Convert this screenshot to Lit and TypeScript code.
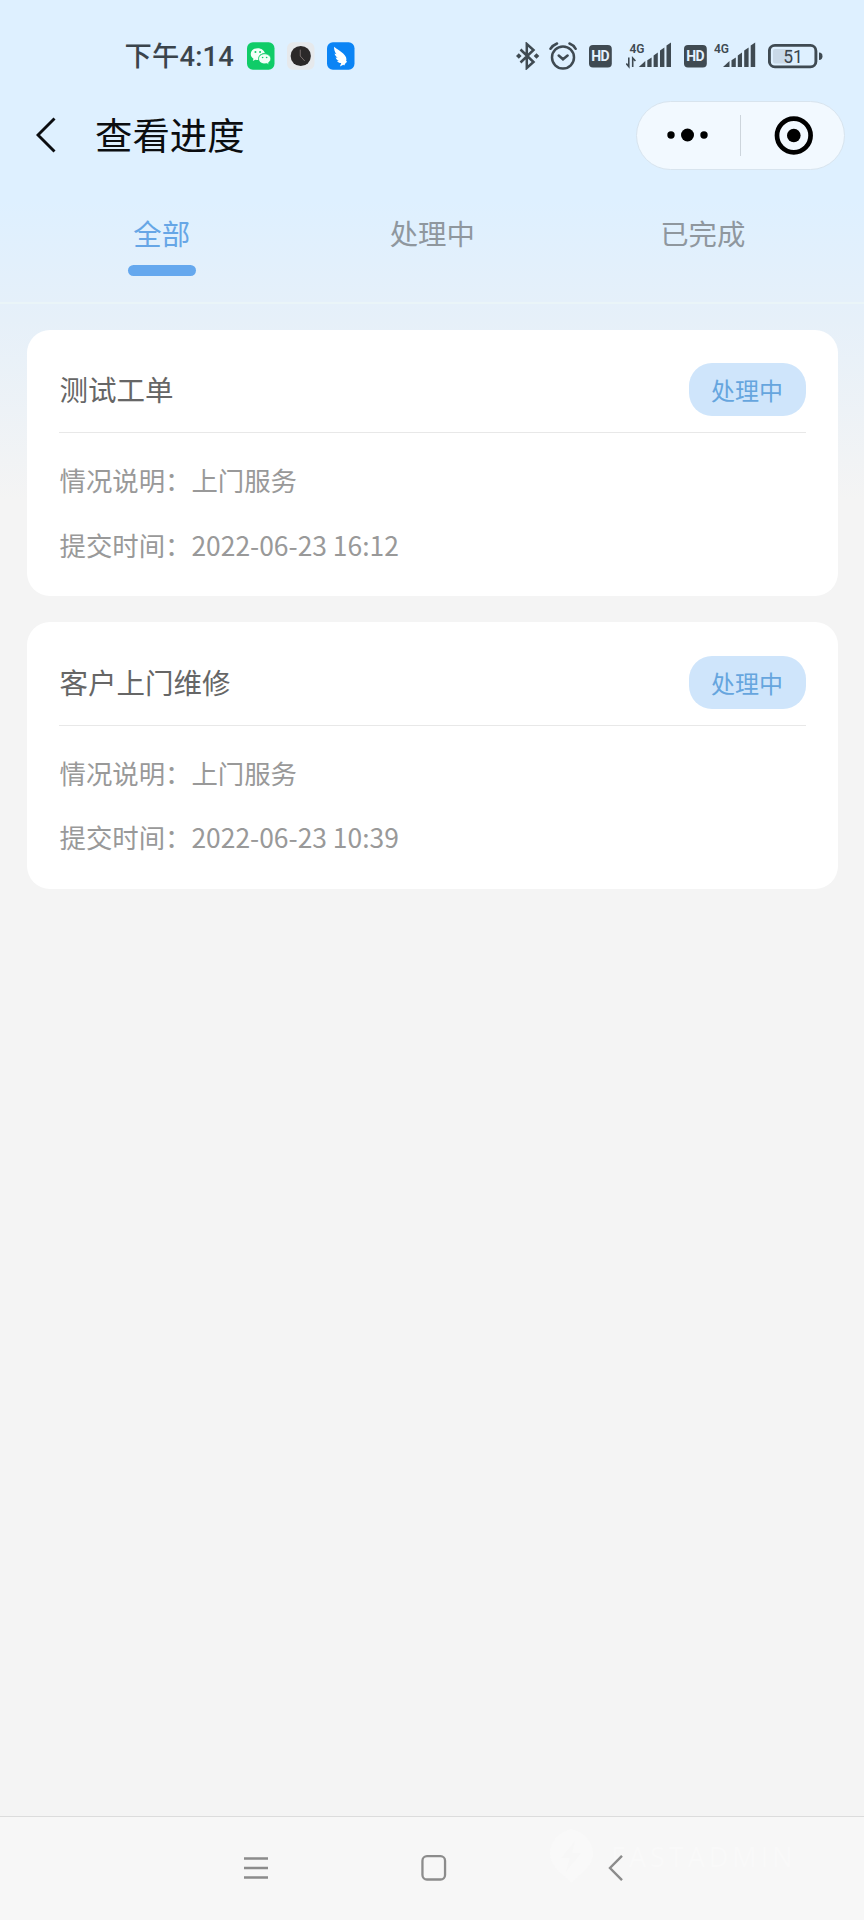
import { LitElement, html, css, svg } from "lit";
import { customElement, property, state } from "lit/decorators.js";
import { classMap } from "lit/directives/class-map.js";

interface Ticket {
  title: string;
  status: string;
  description: string;
  submitted: string;
}

const TABS = ["全部", "处理中", "已完成"];

const TICKETS: Ticket[] = [
  { title: "测试工单", status: "处理中", description: "上门服务", submitted: "2022-06-23 16:12" },
  { title: "客户上门维修", status: "处理中", description: "上门服务", submitted: "2022-06-23 10:39" },
];

@customElement("status-bar")
export class StatusBar extends LitElement {
  static styles = css`
    :host {
      display: flex;
      align-items: center;
      height: 90px;
      box-sizing: border-box;
      padding: 22px 40px 0 124.5px;
      color: #3a444c;
      font-family: Roboto, "Noto Sans CJK SC", sans-serif;
    }
    svg { display: block; flex: none; }
    .time { padding-top: 2px; font-size: 27.3px; font-weight: 500; line-height: 36px; width: 122.5px; box-sizing: border-box; white-space: nowrap; letter-spacing: 0.2px; }
    .apps { display: flex; gap: 12.5px; }
    .spacer { flex: 1; }
    .signals { display: flex; align-items: center; }
    .bt { margin-right: 9px; }
    .alarm { margin-right: 11px; }
    .hd { margin-right: 13px; }
    .hd2 { margin-right: 6px; }
    .net { margin-right: 12px; }
    text { font-family: Roboto, sans-serif; }
  `;

  private hd(cls: string) {
    return html`<svg class=${cls} width="24" height="28" viewBox="0 0 24 28">
      <rect x="0" y="3" width="22.8" height="22.5" rx="4" fill="#3f4a52" />
      <text x="11.4" y="19.4" font-size="14" font-weight="700" text-anchor="middle" fill="#e4f2ff" textLength="18.5">HD</text>
    </svg>`;
  }

  private bars(x: number) {
    return svg`<g transform="translate(${x} 0)" fill="#3f4a52">
      <path d="M0 25 L6.500 19 V25Z" />
      <path d="M8.500 18.200 L12.800 15.500 V25 H8.500Z" />
      <path d="M14.800 13.500 L19 10.500 V25 H14.800Z" />
      <path d="M21.200 8.500 L25.600 5.500 V25 H21.200Z" />
      <path d="M27.700 3.500 L32.200 .5 V25 H27.700Z" />
    </g>`;
  }

  render() {
    return html`
      <span class="time">下午4:14</span>
      <div class="apps">
        <svg width="27.5" height="28" viewBox="0 0 28 28">
          <rect width="28" height="28" rx="6" fill="#10cc68" />
          <path d="M11 6C6.800 6 3.800 8.800 3.800 12c0 2 1.100 3.700 2.800 4.800l-.7 2.300 2.600-1.400c1 .3 2 .3 3 .3C11 13.500 14.500 11 18.200 11 17.600 8.200 14.700 6 11 6Z" fill="#f4fff8" />
          <path d="M18 11.800c-3.500 0-6.200 2.300-6.200 5.100s2.700 5.100 6.200 5.100c.8 0 1.500-.1 2.200-.3l2.200 1.200-.6-2c1.500-1 2.400-2.400 2.400-4 0-2.800-2.700-5.100-6.200-5.100Z" fill="#f4fff8" stroke="#10cc68" stroke-width=".7" />
          <g fill="#10cc68"><circle cx="8.600" cy="10" r="1" /><circle cx="13.300" cy="10" r="1" /><circle cx="15.900" cy="15.500" r=".85" /><circle cx="20" cy="15.500" r=".85" /></g>
        </svg>
        <svg width="27.5" height="28" viewBox="0 0 28 28">
          <rect width="28" height="28" rx="6" fill="#e6e9ec" />
          <circle cx="14" cy="14" r="10.300" fill="#2b2929" />
          <path d="M13.500 7.500V14l4.500 5" fill="none" stroke="#8d8280" stroke-width=".8" />
        </svg>
        <svg width="27.5" height="28" viewBox="0 0 28 28">
          <rect width="28" height="28" rx="6" fill="#0b84f5" />
          <path d="M7.200 4.500c2.800 2.600 6.500 4.200 9.300 7 2.800 2.800 3.900 5 3 7.700l1 .6-1.700 1.500-1.300 2.400-.9-.9-3.400 2 1.300-3.700c-2 0-3.500-.8-4.300-2.100l1.900-.2c-1.800-.7-2.800-1.700-3.300-3.300l2 .3C9 14.600 8.100 13.200 7.700 11.500l2 .7C8 10 7 7.500 7.200 4.500Z" fill="#fff" />
        </svg>
      </div>
      <div class="spacer"></div>
      <div class="signals">
        <svg class="bt" width="24" height="28" viewBox="0 0 24 28" fill="none" stroke="#3f4a52" stroke-width="2.500">
          <path d="M4.500 7.500 17.500 20l-6.700 6V2l6.700 6L4.500 20.500" />
          <path d="M0 14l2.800-2.800L5.600 14l-2.800 2.800ZM17.700 14l2.800-2.800L23.300 14l-2.800 2.800Z" fill="#3f4a52" stroke="none" />
        </svg>
        <svg class="alarm" width="29" height="28" viewBox="0 0 29 28" fill="none" stroke="#3f4a52" stroke-width="2.500" stroke-linecap="round">
          <circle cx="14" cy="15.500" r="11" />
          <path d="M1.500 6.800Q4 3 8 1.500M20.500 1.500Q24.400 3 26.700 6.800M9.700 13.500l4.300 3.800 4.600-3.800" />
        </svg>
        ${this.hd("hd")}
        <svg class="net" width="46" height="28" viewBox="0 0 46 28">
          <text x="3.500" y="11" font-size="12" font-weight="600" fill="#3f4a52">4G</text>
          <path d="M2.800 15.500V24.500L.3 21.500M6.700 25V16L9.400 19" fill="none" stroke="#3f4a52" stroke-width="1.600" />
          ${this.bars(12.8)}
        </svg>
        ${this.hd("hd2")}
        <svg class="net" width="42" height="28" viewBox="0 0 42 28">
          <text x="0" y="11" font-size="12" font-weight="600" fill="#3f4a52">4G</text>
          ${this.bars(9)}
        </svg>
        <svg width="56" height="28" viewBox="0 0 56 28">
          <rect x="1.400" y="3.400" width="46.500" height="21.500" rx="5.500" fill="none" stroke="#3f4a52" stroke-width="2.900" />
          <rect x="5" y="7" width="19" height="14.500" rx="2" fill="#c9d9e8" />
          <path d="M51 10.500q3.500 0 3.500 3.700t-3.500 3.700Z" fill="#3f4a52" />
          <text x="25" y="20.500" font-size="17.500" font-weight="400" text-anchor="middle" fill="#3a444c">51</text>
        </svg>
      </div>
    `;
  }
}

@customElement("title-bar")
export class TitleBar extends LitElement {
  @property() heading = "";

  static styles = css`
    :host {
      display: flex;
      align-items: center;
      height: 90px;
      box-sizing: border-box;
      padding: 0 19.5px 0 36px;
    }
    svg { display: block; flex: none; }
    .title {
      flex: 1;
      margin: -2px 0 0 39px;
      font-size: 37.4px;
      line-height: 50px;
      color: #0b0d10;
    }
    .capsule {
      display: flex;
      align-items: center;
      width: 208.5px;
      height: 69px;
      box-sizing: border-box;
      border: 1px solid #d8e4ee;
      border-radius: 35px;
      background: #f2f9ff;
    }
    .half { flex: 1; display: flex; justify-content: center; }
    .divider { width: 1px; height: 41px; background: #cdd5dc; }
  `;

  render() {
    return html`
      <svg width="20" height="36" viewBox="0 0 20 36">
        <path d="M18.500 1.500 2 18l16.500 16.500" fill="none" stroke="#0b0d10" stroke-width="2.900" />
      </svg>
      <span class="title">${this.heading}</span>
      <div class="capsule">
        <div class="half">
          <svg width="42" height="14" viewBox="0 0 42 14">
            <circle cx="4" cy="7" r="3.700" /><circle cx="20.500" cy="7" r="6.500" /><circle cx="37" cy="7" r="3.700" />
          </svg>
        </div>
        <div class="divider"></div>
        <div class="half">
          <svg width="42" height="40" viewBox="0 0 42 40">
            <circle cx="22.800" cy="20.500" r="16.800" fill="none" stroke="#000" stroke-width="4.700" />
            <circle cx="22.800" cy="20.500" r="6.800" />
          </svg>
        </div>
      </div>
    `;
  }
}

@customElement("ticket-card")
export class TicketCard extends LitElement {
  @property({ attribute: false }) ticket!: Ticket;

  static styles = css`
    :host {
      display: block;
      height: 266.4px;
      box-sizing: border-box;
      padding: 33.6px 32.500px 0;
      border-radius: 23px;
      background: #fff;
    }
    .head {
      display: flex;
      align-items: flex-start;
      justify-content: space-between;
      height: 70px;
      box-sizing: border-box;
      border-bottom: 1.500px solid #e8e8e8;
    }
    .name { padding-left: 0.500px; font-size: 28.5px; line-height: 52px; color: #666; }
    .badge {
      width: 117px;
      height: 53px;
      border-radius: 23px;
      background: #cfe5fb;
      color: #66a5de;
      font-size: 24px;
      line-height: 53px;
      text-align: center;
    }
    .rows { padding: 15px 0 0 0.500px; }
    .row { font-size: 26.4px; line-height: 64.4px; color: #999; white-space: nowrap; }
  `;

  render() {
    const t = this.ticket;
    return html`
      <div class="head">
        <span class="name">${t.title}</span>
        <span class="badge">${t.status}</span>
      </div>
      <div class="rows">
        <div class="row">情况说明：${t.description}</div>
        <div class="row">提交时间：${t.submitted}</div>
      </div>
    `;
  }
}

@customElement("system-nav")
export class SystemNav extends LitElement {
  static styles = css`
    :host {
      display: grid;
      position: relative;
      height: 104px;
      box-sizing: border-box;
      border-top: 1px solid #dcdcdc;
      background: #f7f7f7;
    }
    svg { display: block; flex: none; }
    .keys { position: relative; display: flex; align-items: center; padding: 0 0 1px 244px; }
    .home { margin-left: 153px; }
    .back { margin-left: 161px; }
    .mark {
      position: absolute;
      left: 550px;
      top: 12px;
      display: flex;
      align-items: center;
      gap: 18px;
      color: #f9f9f9;
      font-family: "Open Sans", sans-serif;
      font-size: 27px;
      letter-spacing: 4px;
    }
  `;

  render() {
    return html`
      <div class="mark">
        <svg width="43" height="54" viewBox="0 0 43 54">
          <path d="M21.500 0C9 3 0 12 0 24c0 14 12 20 21.500 30C31 44 43 38 43 24 43 12 34 3 21.500 0Z" fill="#f9f9f9" />
          <path d="M25 12 11 29h9l-4 14 15-19h-9Z" fill="#f7f7f7" />
        </svg>
        <span>FASTADMIN</span>
      </div>
      <div class="keys">
        <svg width="24" height="26" viewBox="0 0 24 26">
          <path d="M0 3.500h24M0 13h24M0 22.500h24" stroke="#8c8c8c" stroke-width="2.400" />
        </svg>
        <svg class="home" width="25.500" height="26" viewBox="0 0 25 26">
          <rect x="1.200" y="1.200" width="22.600" height="23.300" rx="4.500" fill="none" stroke="#8c8c8c" stroke-width="2.300" />
        </svg>
        <svg class="back" width="15" height="26" viewBox="0 0 15 26">
          <path d="M14 .8 2 13l12 12.200" fill="none" stroke="#8c8c8c" stroke-width="2.400" />
        </svg>
      </div>
    `;
  }
}

@customElement("app-root")
export class AppRoot extends LitElement {
  @state() private active = 0;

  static styles = css`
    :host {
      display: flex;
      flex-direction: column;
      height: 1920px;
      background: linear-gradient(180deg, #def0ff 0, #def0ff 200px, #e6f0f9 320px, #f4f4f4 500px);
      font-family: "Noto Sans CJK SC", sans-serif;
    }
    .tabs {
      display: grid;
      grid-template-columns: repeat(3, 1fr);
      height: 124px;
      box-sizing: border-box;
      padding: 33px 26px 0 26.5px;
      border-bottom: 2px solid #eaf5f8;
    }
    .tab {
      display: flex;
      flex-direction: column;
      align-items: center;
      gap: 12px;
      font-size: 28.4px;
      line-height: 40px;
      color: #8f979e;
      cursor: pointer;
    }
    .tab.active { color: #66a6e6; }
    .tab.active::after {
      content: "";
      width: 68px;
      height: 11px;
      border-radius: 5.5px;
      background: #65a8ee;
    }
    .list {
      flex: 1;
      display: flex;
      flex-direction: column;
      gap: 26px;
      padding: 25.800px 26px 0 26.500px;
    }
  `;

  render() {
    return html`
      <status-bar></status-bar>
      <title-bar heading="查看进度"></title-bar>
      <div class="tabs">
        ${TABS.map(
          (label, i) => html`<div
            class=${classMap({ tab: true, active: i === this.active })}
            @click=${() => (this.active = i)}
          >${label}</div>`
        )}
      </div>
      <div class="list">
        ${TICKETS.map((t) => html`<ticket-card .ticket=${t}></ticket-card>`)}
      </div>
      <system-nav></system-nav>
    `;
  }
}
